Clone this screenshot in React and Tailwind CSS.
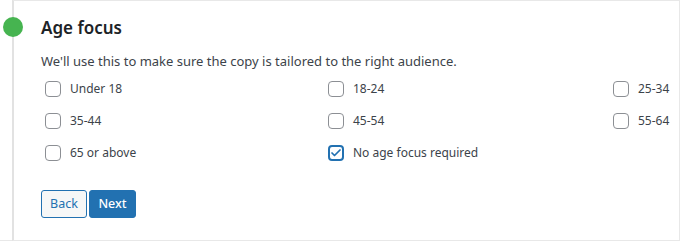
import { Check } from 'lucide-react';

const options = [
  { label: 'Under 18' },
  { label: '18-24' },
  { label: '25-34' },
  { label: '35-44' },
  { label: '45-54' },
  { label: '55-64' },
  { label: '65 or above' },
  { label: 'No age focus required', checked: true },
];

function Box({ checked }) {
  if (checked) {
    return (
      <span className="flex h-[16px] w-[16px] shrink-0 items-center justify-center rounded-[4px] border-2 border-[#2271b1] bg-white">
        <Check size={12} strokeWidth={3.5} className="text-[#2271b1]" />
      </span>
    );
  }
  return <span className="block h-[16px] w-[16px] shrink-0 rounded-[4px] border border-[#8c8f94] bg-white" />;
}

export default function App() {
  return (
    <div className="flex h-[241px] w-[680px] bg-white font-['Noto_Sans',sans-serif] text-[#3c434a]">
      <div className="w-[12px] shrink-0 border-b border-[#e8e8e8]" />
      <div className="relative flex-1 border-y border-r border-l-2 border-[#e8e8e8] border-l-[#e2e2e2] pl-[27px] pr-[4px] pt-[14px]">
        <span className="absolute left-[-11px] top-[16px] h-[20px] w-[20px] rounded-full bg-[#46b450]" />
        <h2 className="text-[17px] font-semibold leading-[26px] text-[#1d2327]">Age focus</h2>
        <p className="mt-[11px] text-[13px] leading-[18px]">
          We'll use this to make sure the copy is tailored to the right audience.
        </p>
        <div className="mt-[3px] grid grid-cols-[283px_285px_auto]">
          {options.map((o) => (
            <label key={o.label} className="flex h-[32px] items-center gap-[9px] whitespace-nowrap pl-[4px] text-[12px]">
              <Box checked={o.checked} />
              <span>{o.label}</span>
            </label>
          ))}
        </div>
        <div className="mt-[21px] flex gap-[2px]">
          <button className="h-[28px] w-[46px] rounded-[3px] border border-[#2271b1] bg-[#f6f7f7] text-[12.5px] text-[#2271b1]">
            Back
          </button>
          <button className="h-[28px] w-[47px] rounded-[3px] border border-[#2271b1] bg-[#2271b1] text-[12.5px] font-medium text-white">
            Next
          </button>
        </div>
      </div>
    </div>
  );
}
